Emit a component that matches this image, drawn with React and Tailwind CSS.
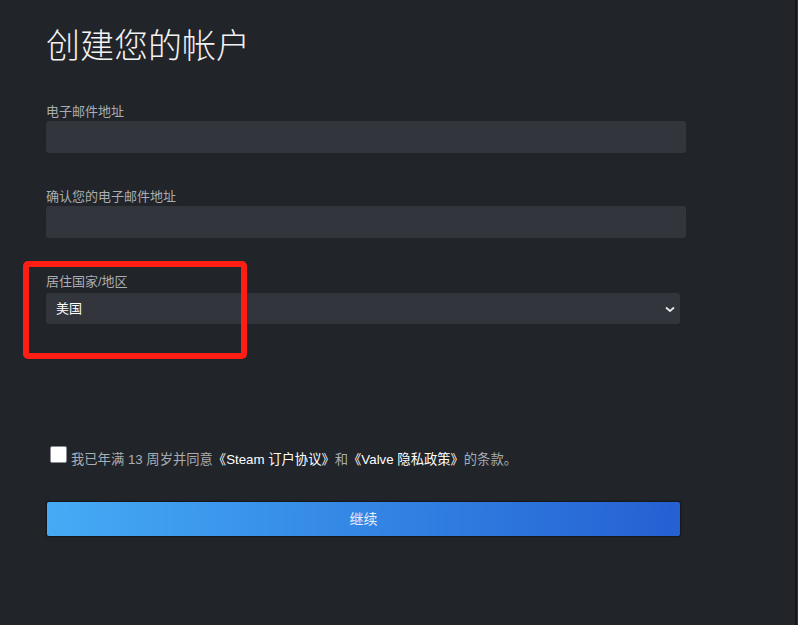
import { useState } from "react";

const FONT = { fontFamily: '"Liberation Sans", "Noto Sans CJK SC", sans-serif' };

function Field({ label, className = "" }) {
  return (
    <div className={className}>
      <label className="block pt-[2px] text-[13px] leading-[18px] text-[#a9adb3]">{label}</label>
      <input
        type="text"
        className="block h-[32px] w-[640px] rounded-[3px] bg-[#32353c] px-2 text-[13px] text-white outline-none"
      />
    </div>
  );
}

export default function App() {
  const [agreed, setAgreed] = useState(false);

  return (
    <div className="flex min-h-screen bg-[#212429]" style={FONT}>
      <div className="relative flex-1">
        <main className="pl-[46px] pt-[26px]">
          <h1 className="text-[34px] font-light leading-[40px] text-[#f2f2f2]">创建您的帐户</h1>

          <Field label="电子邮件地址" className="mt-[35px]" />
          <Field label="确认您的电子邮件地址" className="mt-[33px]" />

          <div className="mt-[33px]">
            <label className="block pt-[2px] text-[13px] leading-[18px] text-[#a9adb3]">居住国家/地区</label>
            <div className="mt-[2px] flex h-[31px] w-[634px] items-center justify-between rounded-[3px] bg-[#32353c] pl-[10px] pr-[5px]">
              <span className="text-[13px] text-white">美国</span>
              <svg width="10" height="7" viewBox="0 0 10 7" fill="none" className="mt-[1px]">
                <path d="M1 1.5 L5 5 L9 1.5" stroke="#e8e8e8" strokeWidth="1.8" />
              </svg>
            </div>
          </div>

          <div className="mt-[122px] flex h-[20px] items-start pl-[4px]">
            <button
              type="button"
              onClick={() => setAgreed(!agreed)}
              className="h-[17px] w-[17px] shrink-0 rounded-[2px] border border-[#8a8d92] bg-white"
            >
              {agreed && (
                <svg viewBox="0 0 16 16" className="h-full w-full">
                  <path d="M3 8 L6.5 11.5 L13 4.5" stroke="#1a1a1a" strokeWidth="2" fill="none" />
                </svg>
              )}
            </button>
            <p className="ml-[4px] mt-[4px] text-[13.3px] leading-[20px] text-[#a9adb3]">
              我已年满 13 周岁并同意<span className="text-white">《Steam 订户协议》</span>和
              <span className="text-white">《Valve 隐私政策》</span>的条款。
            </p>
          </div>

          <button
            type="button"
            className="mt-[36px] ml-[1px] block h-[34px] w-[633px] rounded-[2px] bg-gradient-to-r from-[#46abf5] to-[#2660d3] text-[14px] text-[#e4edfb] shadow-[0_0_2px_1px_rgba(0,0,0,0.4)]"
          >
            继续
          </button>
        </main>

        <div className="pointer-events-none absolute left-[23px] top-[261px] h-[98px] w-[224px] rounded-[5px] border-[6px] border-[#fe1e14]" />
      </div>
      <div className="w-[2px] bg-[#16171b]" />
      <div className="w-px bg-[#2e3137]" />
    </div>
  );
}
